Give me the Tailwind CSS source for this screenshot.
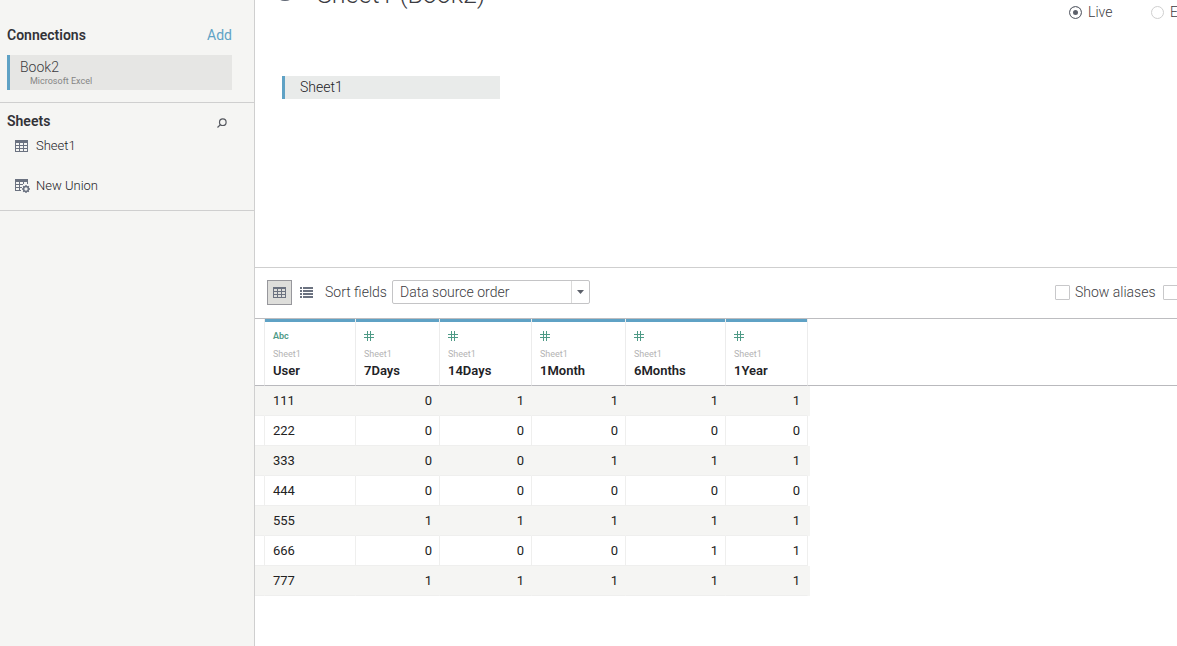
<!DOCTYPE html>
<html lang="en">
<head>
  <meta charset="UTF-8">
  <meta name="viewport" content="width=device-width, initial-scale=1.0">
  <title>Sheet1 (Book2)</title>
  <script src="https://cdn.jsdelivr.net/npm/@tailwindcss/browser@4"></script>
</head>
<body class="flex h-screen overflow-hidden bg-white font-['Roboto',sans-serif] text-[13px] leading-5 font-light text-[#222226]">

  <!-- Left pane -->
  <aside class="w-[255px] shrink-0 border-r border-[#cfcfcf] bg-[#f5f5f3]">
    <section class="border-b border-[#cfcfcf] pt-[25px] pb-3 pl-[7px] pr-[22px]">
      <div class="flex items-center justify-between">
        <h2 class="text-sm leading-5 font-semibold text-[#333338]">Connections</h2>
        <a href="#" class="text-sm leading-5 font-normal text-[#5fa2c5]">Add</a>
      </div>
      <button class="mt-[10px] block h-[35px] w-full border-l-[3px] border-[#5fa2c5] bg-[#e6e6e4] pb-[3px] pl-[10px] text-left text-[#3c3c40]">
        <span class="block text-sm leading-5">Book2</span>
        <span class="block pl-[10px] text-[9px] leading-[9px] font-normal text-[#858585]">Microsoft Excel</span>
      </button>
    </section>

    <section class="border-b border-[#cfcfcf] pt-2 pb-[14px] pl-[7px] pr-[27px]">
      <div class="flex items-center justify-between">
        <h2 class="text-sm leading-5 font-semibold text-[#333338]">Sheets</h2>
        <button aria-label="Search sheets" class="pt-1">
          <svg class="size-[10px]" viewBox="0 0 10 10" fill="none" stroke="#55585f" stroke-width="1.2">
            <circle cx="5.8" cy="4.2" r="3.3"/>
            <path d="M3.4 6.6L.5 9.5"/>
          </svg>
        </button>
      </div>
      <ul class="mt-[5px] space-y-5 pl-2">
        <li>
          <a href="#" class="flex items-center gap-[6px]">
            <svg class="h-3 w-[15px]" viewBox="0 0 15 12" fill="#6b7280" shape-rendering="crispEdges">
              <path d="M0 0h13v12H0zM1 3v2h3V3zM5 3v2h3V3zM9 3v2h3V3zM1 6v2h3V6zM5 6v2h3V6zM9 6v2h3V6zM1 9v2h3V9zM5 9v2h3V9zM9 9v2h3V9z" fill-rule="evenodd"/>
            </svg>
            Sheet1
          </a>
        </li>
        <li>
          <a href="#" class="flex items-center gap-[6px]">
            <svg class="h-[14px] w-[15px]" viewBox="0 0 15 14" fill="#6b7280">
              <path d="M0 0h13v5h-1V3H9v2H8V3H5v2h3v1H5v2h2v1H5v2h1v1H0zM1 3v2h3V3zM1 6v2h3V6zM1 9v2h3V9z" fill-rule="evenodd" shape-rendering="crispEdges"/>
              <circle cx="11" cy="10" r="2.4" fill="none" stroke="#6b7280" stroke-width="1.5"/>
              <path d="M11 6v1.5M11 12.500V14M7 10h1.500M13.500 10H15M8.200 7.200l1 1M12.800 11.800l1 1M8.200 12.800l1-1M12.800 8.200l1-1" stroke="#6b7280" stroke-width="1.3"/>
            </svg>
            New Union
          </a>
        </li>
      </ul>
    </section>
  </aside>

  <main class="min-w-0 flex-1 overflow-hidden">

    <!-- Canvas -->
    <section class="h-[268px] border-b border-[#cfcfcf]">
      <div class="flex h-[76px] justify-between">
        <div class="-mt-[21px] flex h-8 items-start pl-[22px] text-[#3c3c42]">
          <svg class="mt-[5px] mr-6 h-[17px] w-4" viewBox="0 0 16 17" fill="none" stroke="#5f6673" stroke-width="1.5">
            <ellipse cx="8" cy="3" rx="5" ry="2"/>
            <path d="M3 3v11c0 1.200 2.200 2.200 5 2.200s5-1 5-2.200V3"/>
          </svg>
          <h1 class="text-[25px] leading-8 whitespace-nowrap">Sheet1 (Book2)</h1>
        </div>
        <fieldset class="flex h-6 w-[108px] shrink-0 items-center text-sm leading-5 whitespace-nowrap text-[#3c3c42]">
          <label class="flex shrink-0 items-center gap-[6px]">
            <input type="radio" name="connection" checked class="size-[13px] appearance-none rounded-full border border-[#666a73] bg-[#5c606a] shadow-[inset_0_0_0_3px_white]">
            Live
          </label>
          <label class="ml-auto flex w-[26px] shrink-0 items-center gap-[6px]">
            <input type="radio" name="connection" class="size-[13px] shrink-0 appearance-none rounded-full border border-[#cfcfcf]">
            Extract
          </label>
        </fieldset>
      </div>
      <button class="ml-[27px] block h-[23px] w-[218px] border-l-[3px] border-[#5fa2c5] bg-[#e9ebea] pb-[2px] pl-[15px] text-left text-sm leading-5">Sheet1</button>
    </section>

    <!-- Grid toolbar -->
    <section class="flex h-[51px] items-center border-b border-[#bdbdc0] pb-[2px] pl-3 text-sm leading-5 whitespace-nowrap text-[#3c3c42]">
      <button aria-label="Preview data" class="flex size-[25px] items-center justify-center border border-[#97979c] bg-[#dededb]">
        <svg class="h-[11px] w-[13px]" viewBox="0 0 13 11" fill="#6b7280" shape-rendering="crispEdges">
          <path d="M0 0h13v11H0zM1 2v2h3V2zM5 2v2h3V2zM9 2v2h3V2zM1 5v2h3V5zM5 5v2h3V5zM9 5v2h3V5zM1 8v2h3V8zM5 8v2h3V8zM9 8v2h3V8z" fill-rule="evenodd"/>
        </svg>
      </button>
      <button aria-label="Manage metadata" class="ml-2">
        <svg class="h-[11px] w-[13px]" viewBox="0 0 13 11" fill="#6b7280" shape-rendering="crispEdges">
          <path d="M0 0h2v2H0zM3 0h10v2H3zM0 3h2v2H0zM3 3h10v2H3zM0 6h2v2H0zM3 6h10v2H3zM0 9h2v2H0zM3 9h10v2H3z"/>
        </svg>
      </button>
      <label for="sort" class="ml-3 w-[67px]">Sort fields</label>
      <div class="relative">
        <select id="sort" class="block h-6 w-[198px] appearance-none rounded-[2px] border border-[#c4c4c6] bg-white pl-[7px]">
          <option>Data source order</option>
          <option>A to Z ascending</option>
          <option>Z to A descending</option>
        </select>
        <span class="pointer-events-none absolute inset-y-px right-px flex w-[18px] items-center justify-center border-l border-[#dadada]">
          <svg class="h-1 w-[7px]" viewBox="0 0 7 4" fill="#5c606a"><path d="M0 0h7L3.500 4z"/></svg>
        </span>
      </div>
      <div class="ml-auto flex w-[122px] shrink-0 items-center">
        <label class="flex w-[108px] shrink-0 items-center gap-[5px]">
          <input type="checkbox" class="size-[15px] shrink-0 appearance-none rounded-[1px] border border-[#c8c8ca]">
          Show aliases
        </label>
        <label class="flex shrink-0 items-center gap-[5px]">
          <input type="checkbox" class="size-[15px] shrink-0 appearance-none rounded-[1px] border border-[#c8c8ca]">
          Show hidden fields
        </label>
      </div>
    </section>

    <!-- Data preview -->
    <table class="w-full table-fixed border-separate border-spacing-0">
      <colgroup>
        <col class="w-[10px]">
        <col class="w-[91px]">
        <col class="w-[84px]">
        <col class="w-[92px]">
        <col class="w-[94px]">
        <col class="w-[100px]">
        <col class="w-[82px]">
        <col class="w-[2px]">
        <col>
      </colgroup>
      <thead id="fields"></thead>
      <tbody id="rows"></tbody>
    </table>
  </main>

  <script>
    const fields = ["User", "7Days", "14Days", "1Month", "6Months", "1Year"];
    const data = [
      [111, 0, 1, 1, 1, 1],
      [222, 0, 0, 0, 0, 0],
      [333, 0, 0, 1, 1, 1],
      [444, 0, 0, 0, 0, 0],
      [555, 1, 1, 1, 1, 1],
      [666, 0, 0, 0, 1, 1],
      [777, 1, 1, 1, 1, 1]
    ];

    const hash = `<svg class="size-[10px]" viewBox="0 0 10 10" stroke="#4e9a86" shape-rendering="crispEdges"><path d="M3.5 0v10M6.500 0v10M0 3.500h10M0 6.500h10"/></svg>`;
    const abc = `<span class="text-[9px] font-semibold text-[#4e9a86]">Abc</span>`;

    const heads = fields.map((name, i) => `
      <th scope="col" class="h-[67px] border-r border-b border-r-[#ececec] border-b-[#b9b9bd] p-0 text-left align-top">
        <div class="h-[3px] bg-[#5fa2c5]"></div>
        <div class="pt-2 pl-2">
          <div class="flex h-3 items-center">${i === 0 ? abc : hash}</div>
          <div class="mt-[6px] text-[9px] leading-3 font-normal text-[#b4b4b4]">Sheet1</div>
          <div class="mt-px text-[13px] leading-5 font-semibold">${name}</div>
        </div>
      </th>`).join("");
    document.getElementById("fields").innerHTML = `
      <tr>
        <td class="border-r border-b border-r-[#ececec] border-b-[#b9b9bd]"></td>${heads}
        <td class="border-b border-[#b9b9bd]"></td>
        <td class="border-b border-[#b9b9bd]"></td>
      </tr>`;

    document.getElementById("rows").innerHTML = data.map((row, r) => {
      // odd rows are striped, column lines only show on the white ones
      const cell = r % 2 === 0 ? "bg-[#f5f5f3] border-r border-r-[#f5f5f3] border-b border-b-[#efefee]" : "border-r border-b border-[#efefee]";
      const cells = row.map((v, i) => `<td class="h-[30px] p-0 ${cell} ${i === 0 ? "pl-2 text-left" : "pr-[7px] text-right"}">${v}</td>`).join("");
      return `<tr class="font-normal text-[#222]"><td class="p-0 ${cell}"></td>${cells}<td class="p-0 ${r % 2 === 0 ? "bg-[#f5f5f3]" : ""}"></td><td></td></tr>`;
    }).join("");
  </script>
</body>
</html>
